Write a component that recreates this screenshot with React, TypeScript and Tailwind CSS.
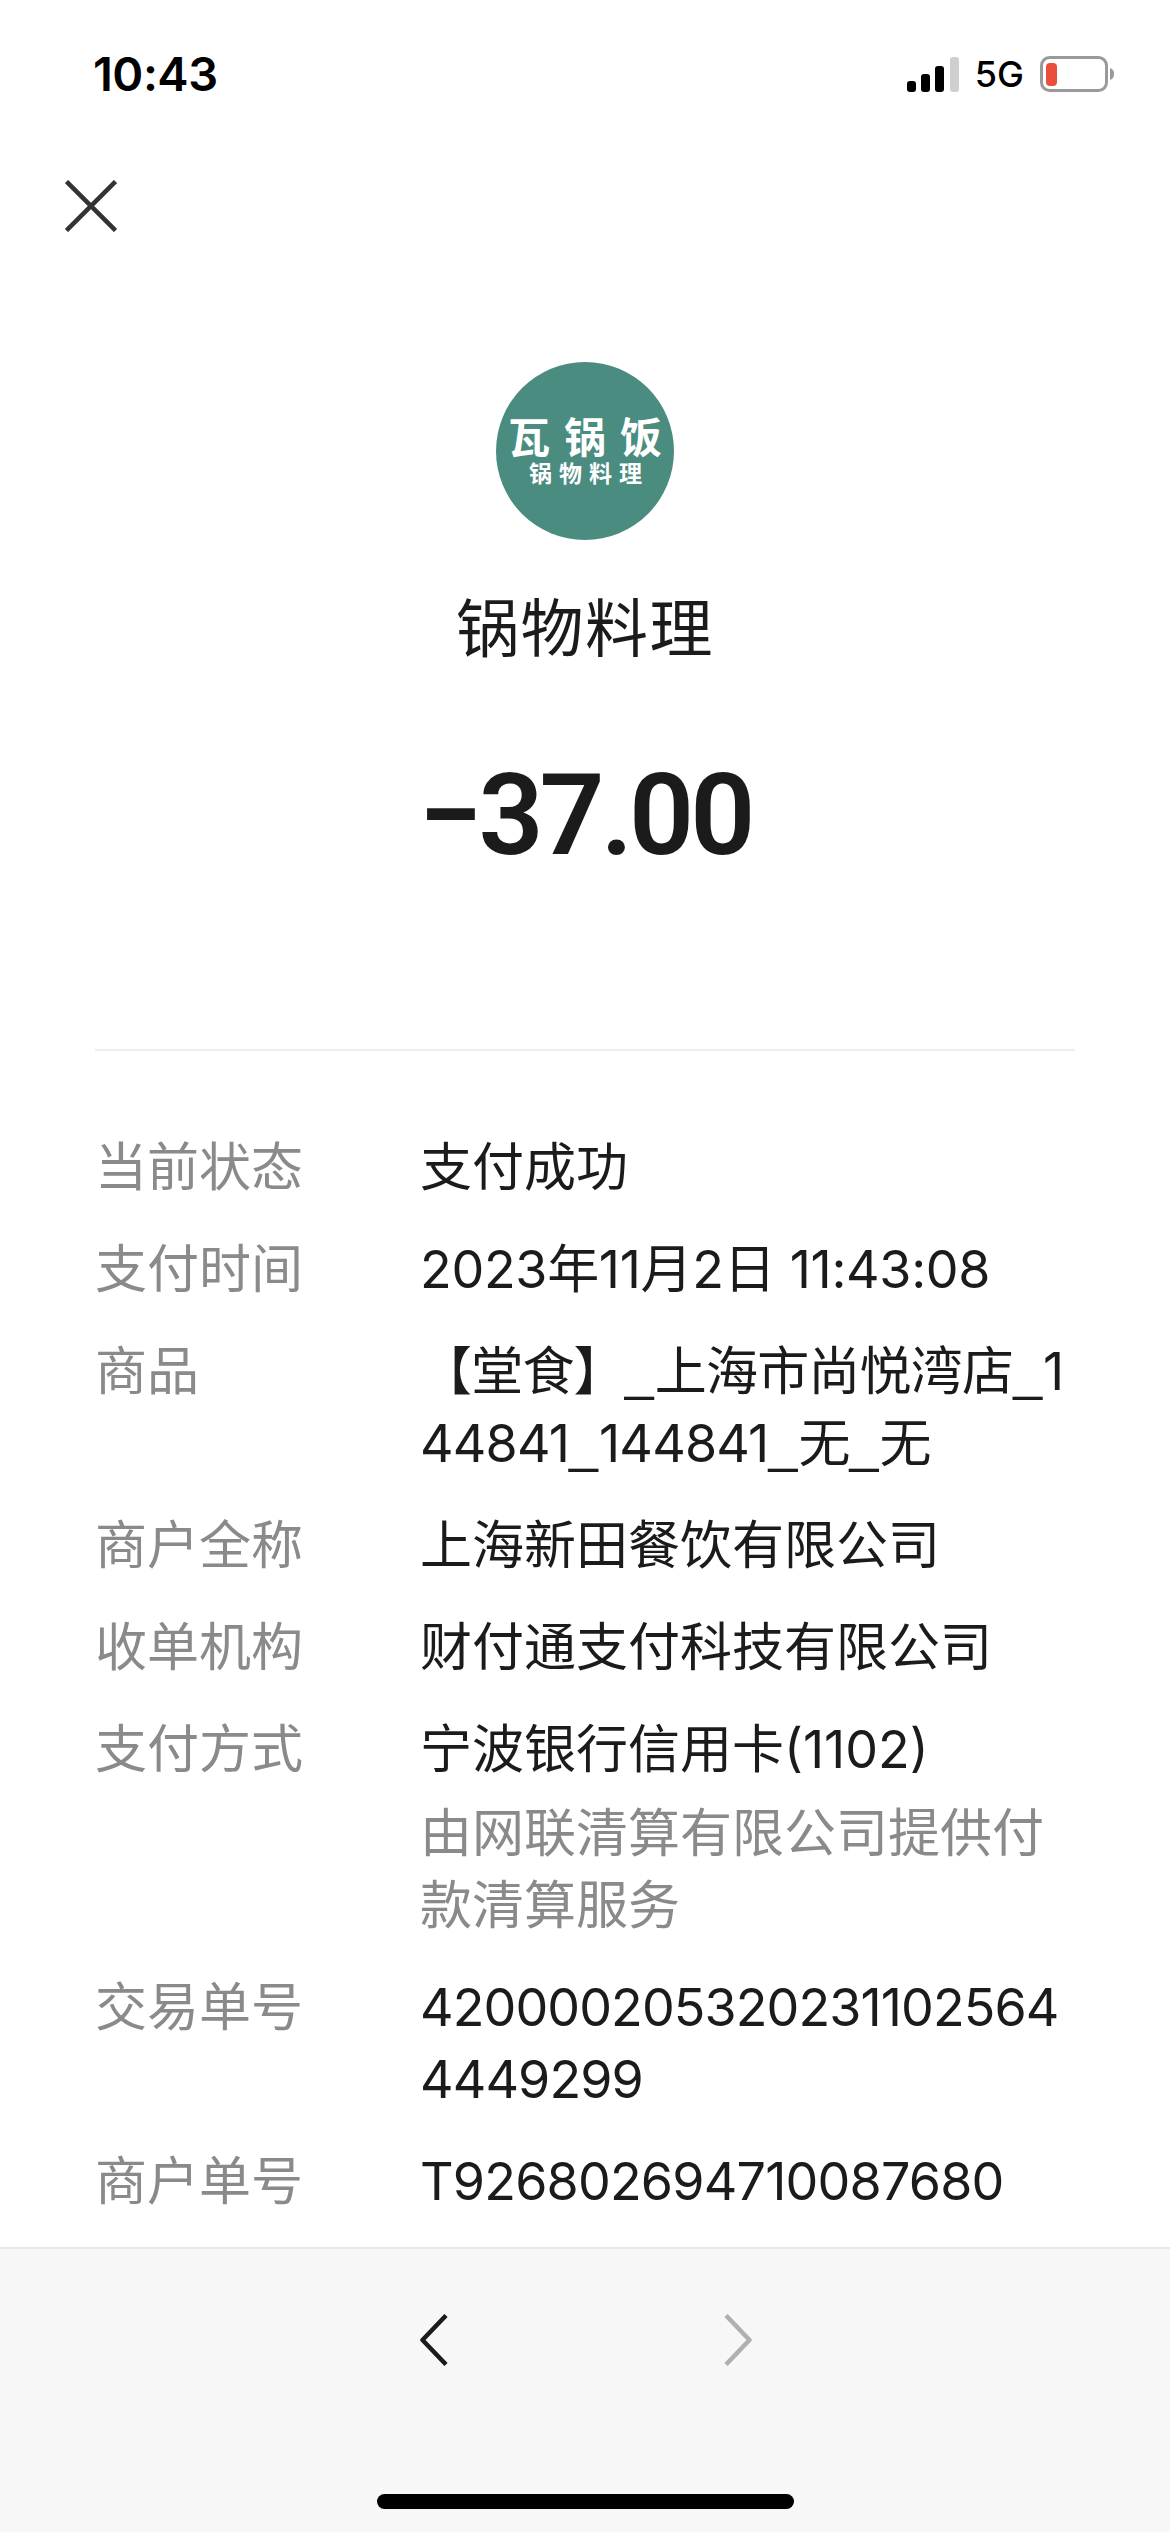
import React from "react";

const FONT = '"Inter", "Noto Sans CJK SC", sans-serif';

function Row({ label, children }: { label: string; children: React.ReactNode }) {
  return (
    <div className="flex">
      <div className="w-[325px] shrink-0 text-[#8a8a8a]">{label}</div>
      <div className="min-w-0 flex-1 break-all text-[#1b1b1b]">{children}</div>
    </div>
  );
}

function U() {
  return <span className="font-['Liberation_Sans'] tracking-[1px]">_</span>;
}

export default function App() {
  return (
    <div className="flex h-[2532px] w-[1170px] flex-col overflow-hidden bg-white" style={{ fontFamily: FONT }}>
      {/* status bar */}
      <div className="flex h-[148px] shrink-0 items-start justify-between pl-[93px] pr-[56px] pt-[48px]">
        <div className="text-[47px] font-semibold leading-[52px] tracking-[-0.5px] text-black">10:43</div>
        <div className="flex items-center gap-[16px] pt-[8px]">
          <svg width="52" height="35" viewBox="0 0 52 35">
            <rect x="0" y="24" width="9" height="11" rx="3" fill="#000" />
            <rect x="14" y="17" width="9" height="18" rx="3" fill="#000" />
            <rect x="28" y="9" width="9" height="26" rx="3" fill="#000" />
            <rect x="43" y="0" width="9" height="35" rx="3" fill="#cfcfcf" />
          </svg>
          <span className="text-[36px] font-medium leading-[35px] text-black">5G</span>
          <svg width="74" height="36" viewBox="0 0 74 36">
            <rect x="1.5" y="1.5" width="65" height="33" rx="8" fill="none" stroke="#9a9a9a" strokeWidth="3" />
            <rect x="6" y="7" width="11" height="23" rx="4" fill="#ea4f3d" />
            <path d="M70 12 C73 13 74 15 74 18 C74 21 73 23 70 24 Z" fill="#9a9a9a" />
          </svg>
        </div>
      </div>

      {/* close */}
      <div className="h-[214px] shrink-0 pl-[65px] pt-[32px]">
        <svg width="52" height="52" viewBox="0 0 52 52" fill="none" stroke="#333" strokeWidth="4.5">
          <path d="M1.5 1.5 L50.5 50.5 M50.5 1.5 L1.5 50.5" />
        </svg>
      </div>

      {/* merchant */}
      <div className="flex shrink-0 flex-col items-center">
        <div className="flex h-[178px] w-[178px] flex-col items-center justify-center rounded-full bg-[#4a8c80] text-white">
          <div className="ml-[14px] shrink-0 whitespace-nowrap text-[42px] font-bold leading-[46px] tracking-[14px]">瓦锅饭</div>
          <div className="ml-[8px] shrink-0 whitespace-nowrap text-[23px] font-bold leading-[26px] tracking-[7px]">锅物料理</div>
        </div>
        <div className="mt-[48px] text-[63px] leading-[80px] tracking-[1.5px] text-[#1b1b1b]">锅物料理</div>
        <div className="mt-[81px] text-[114px] font-semibold leading-[132px] tracking-[-4px] text-[#1b1b1b]" style={{ fontFamily: '"Roboto", sans-serif' }}>
          −37.00
        </div>
      </div>

      {/* details */}
      <div className="min-h-0 flex-1 px-[95px] pt-[168px]">
        <div className="h-[2px] bg-[#eeeeee]" />
        <div className="mt-[81px] flex flex-col gap-[30px] text-[52px] leading-[72px]">
          <Row label="当前状态">支付成功</Row>
          <Row label="支付时间">
            <span className="tracking-[-0.3px]">2023年11月2日 11:43:08</span>
          </Row>
          <Row label="商品">
            <div className="h-[72px] whitespace-nowrap tracking-[-0.8px]">
              【堂食】<U />上海市尚悦湾店<U />1
            </div>
            <div className="h-[72px] whitespace-nowrap tracking-[-0.8px]">
              44841<U />144841<U />无<U />无
            </div>
          </Row>
          <Row label="商户全称">上海新田餐饮有限公司</Row>
          <Row label="收单机构">财付通支付科技有限公司</Row>
          <Row label="支付方式">
            <div>宁波银行信用卡(1102)</div>
            <div className="mt-[12px] text-[#8a8a8a]">由网联清算有限公司提供付款清算服务</div>
          </Row>
          <Row label="交易单号">
            <span className="tracking-[-0.9px]">4200002053202311025644449299</span>
          </Row>
          <Row label="商户单号">
            <span className="tracking-[-0.8px]">T926802694710087680</span>
          </Row>
        </div>
      </div>

      {/* footer */}
      <div className="flex h-[285px] shrink-0 flex-col items-center border-t-2 border-[#e8e8e8] bg-[#f7f7f7]">
        <div className="flex h-[245px] w-full justify-center gap-[274px] pl-[2px] pt-[65px]">
          <svg width="30" height="52" viewBox="0 0 30 52" fill="none" stroke="#1b1b1b" strokeWidth="4.5">
            <path d="M27 1.5 L3.5 26 L27 50.5" strokeLinejoin="round" />
          </svg>
          <svg width="30" height="52" viewBox="0 0 30 52" fill="none" stroke="#b0b0b0" strokeWidth="4.5">
            <path d="M3 1.5 L26.5 26 L3 50.5" strokeLinejoin="round" />
          </svg>
        </div>
        <div className="h-[15px] w-[417px] rounded-full bg-black" />
      </div>
    </div>
  );
}
